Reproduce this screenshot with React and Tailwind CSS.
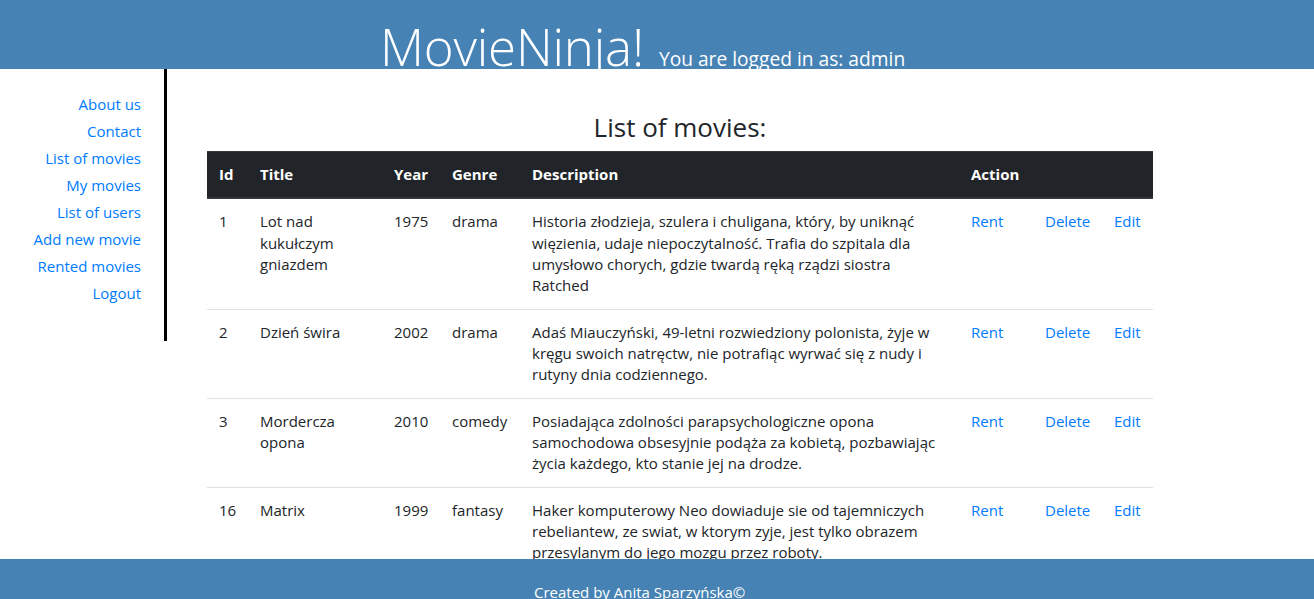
const links = [
    "About us",
    "Contact",
    "List of movies",
    "My movies",
    "List of users",
    "Add new movie",
    "Rented movies",
    "Logout",
];

const movies = [
    {
        id: 1,
        title: ["Lot nad", "kukułczym", "gniazdem"],
        year: 1975,
        genre: "drama",
        desc: [
            "Historia złodzieja, szulera i chuligana, który, by uniknąć",
            "więzienia, udaje niepoczytalność. Trafia do szpitala dla",
            "umysłowo chorych, gdzie twardą ręką rządzi siostra",
            "Ratched",
        ],
    },
    {
        id: 2,
        title: ["Dzień świra"],
        year: 2002,
        genre: "drama",
        desc: [
            "Adaś Miauczyński, 49-letni rozwiedziony polonista, żyje w",
            "kręgu swoich natręctw, nie potrafiąc wyrwać się z nudy i",
            "rutyny dnia codziennego.",
        ],
    },
    {
        id: 3,
        title: ["Mordercza", "opona"],
        year: 2010,
        genre: "comedy",
        desc: [
            "Posiadająca zdolności parapsychologiczne opona",
            "samochodowa obsesyjnie podąża za kobietą, pozbawiając",
            "życia każdego, kto stanie jej na drodze.",
        ],
    },
    {
        id: 16,
        title: ["Matrix"],
        year: 1999,
        genre: "fantasy",
        desc: [
            "Haker komputerowy Neo dowiaduje sie od tajemniczych",
            "rebeliantew, ze swiat, w ktorym zyje, jest tylko obrazem",
            "przesylanym do jego mozgu przez roboty.",
        ],
    },
];

const Lines = ({ lines }) => (
    <>
        {lines.map((l, i) => (
            <span key={i} className="block whitespace-nowrap">{l}</span>
        ))}
    </>
);

const App = () => {
    return (
        <div className="h-[599px] flex flex-col overflow-hidden bg-white font-['Open_Sans',sans-serif] text-[#212529]">
            <header className="h-[69px] shrink-0 overflow-hidden bg-[#4682b4] text-white">
                <div className="flex items-baseline pl-[380px] pt-[16px]">
                    <h1 className="text-[51px] leading-[60px] font-light tracking-[-0.2px]">MovieNinja!</h1>
                    <span className="ml-[15px] text-[19.2px] leading-[24px]">You are logged in as: admin</span>
                </div>
            </header>

            <div className="flex-1 flex overflow-hidden">
                <nav className="w-[167px] h-[272px] shrink-0 border-r-[3px] border-black pt-[22px] pr-[23px] text-right">
                    {links.map((l) => (
                        <a key={l} href="#" className="block text-[15px] leading-[27px] text-[#007bff]">{l}</a>
                    ))}
                </nav>

                <main className="pl-[40px] pt-[43px]">
                    <h3 className="w-[946px] text-center text-[26px] leading-[31px] mb-[8px]">List of movies:</h3>
                    <table className="w-[946px] table-fixed border-collapse text-[15px] leading-[21.33px]">
                        <colgroup>
                            <col className="w-[41px]" />
                            <col className="w-[134px]" />
                            <col className="w-[58px]" />
                            <col className="w-[80px]" />
                            <col className="w-[439px]" />
                            <col className="w-[74px]" />
                            <col className="w-[69px]" />
                            <col className="w-[51px]" />
                        </colgroup>
                        <thead>
                            <tr className="bg-[#212529] text-white text-left">
                                {["Id", "Title", "Year", "Genre", "Description", "Action", "", ""].map((h, i) => (
                                    <th key={i} className="p-[12px] font-bold border-t border-b-2 border-[#32383e]">{h}</th>
                                ))}
                            </tr>
                        </thead>
                        <tbody>
                            {movies.map((m) => (
                                <tr key={m.id} className="border-t border-[#dee2e6] align-top">
                                    <td className="p-[12px]">{m.id}</td>
                                    <td className="p-[12px]"><Lines lines={m.title} /></td>
                                    <td className="p-[12px]">{m.year}</td>
                                    <td className="p-[12px]">{m.genre}</td>
                                    <td className="p-[12px]"><Lines lines={m.desc} /></td>
                                    <td className="p-[12px]"><a href="#" className="text-[#007bff]">Rent</a></td>
                                    <td className="p-[12px]"><a href="#" className="text-[#007bff]">Delete</a></td>
                                    <td className="p-[12px]"><a href="#" className="text-[#007bff]">Edit</a></td>
                                </tr>
                            ))}
                        </tbody>
                    </table>
                </main>
            </div>

            <footer className="h-[40px] shrink-0 overflow-hidden bg-[#4682b4] text-white">
                <p className="pl-[534px] pt-[21px] text-[15px] leading-[24px]">Created by Anita Sparzyńska©</p>
            </footer>
        </div>
    );
};

export default App;
